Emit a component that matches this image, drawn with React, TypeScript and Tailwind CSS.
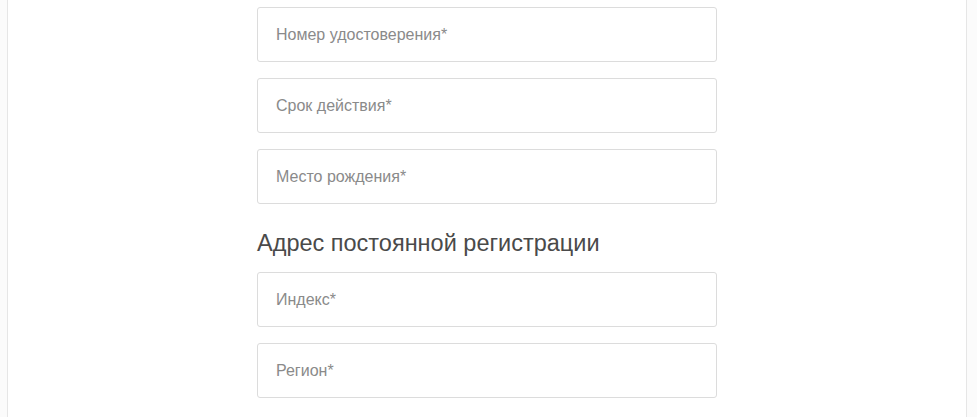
const fields = ["Номер удостоверения*", "Срок действия*", "Место рождения*"];
const address = ["Индекс*", "Регион*"];

function Field({ label }: { label: string }) {
  return (
    <input
      type="text"
      placeholder={label}
      className="block w-full h-[55px] px-[18px] rounded-[3px] border border-[#dcdcdc] bg-white text-[16px] text-[#555] placeholder:text-[#8a8a8a] outline-none"
    />
  );
}

export default function App() {
  return (
    <div className="min-h-[417px] bg-[#fbfbfb] font-['Liberation_Sans',Arial,sans-serif]">
      <div className="ml-[7px] w-[960px] min-h-[417px] bg-white border-x border-[#e6e6e6] pt-[7px]">
        <div className="mx-auto w-[460px] flex flex-col">
          <div className="flex flex-col gap-[16px]">
            {fields.map((f) => (
              <Field key={f} label={f} />
            ))}
          </div>
          <h3 className="mt-[24px] mb-[14px] text-[23.5px] leading-[30px] font-light text-[#4a4a4a]">
            Адрес постоянной регистрации
          </h3>
          <div className="flex flex-col gap-[16px]">
            {address.map((f) => (
              <Field key={f} label={f} />
            ))}
          </div>
        </div>
      </div>
    </div>
  );
}
